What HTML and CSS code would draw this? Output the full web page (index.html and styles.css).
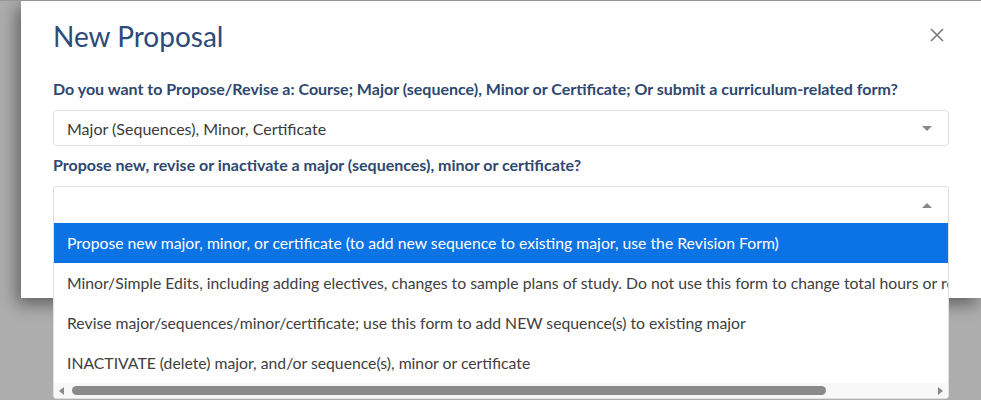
FILE: index.html
```html
<!DOCTYPE html>
<html lang="en">
<head>
    <meta charset="UTF-8">
    <meta name="viewport" content="width=device-width, initial-scale=1.0">
    <title>New Proposal</title>
    <link rel="stylesheet" href="styles.css">
</head>
<body>
    <div class="modal">
        <div class="modal-header">
            <h1>New Proposal</h1>
            <button class="close" aria-label="Close">
                <svg width="16" height="16" viewBox="0 0 16 16">
                    <path d="M2 2L14 14M14 2L2 14" stroke="currentColor" stroke-width="1.6" fill="none" />
                </svg>
            </button>
        </div>

        <label>Do you want to Propose/Revise a: Course; Major (sequence), Minor or Certificate; Or submit a curriculum-related form?</label>
        <div class="select">
            <span>Major (Sequences), Minor, Certificate</span>
            <span class="arrow down"></span>
        </div>

        <label>Propose new, revise or inactivate a major (sequences), minor or certificate?</label>
        <div class="select-wrap">
            <div class="select open">
                <span></span>
                <span class="arrow up"></span>
            </div>
            <div class="dropdown">
                <ul class="options">
                    <li class="active">Propose new major, minor, or certificate (to add new sequence to existing major, use the Revision Form)</li>
                    <li>Minor/Simple Edits, including adding electives, changes to sample plans of study. Do not use this form to change total hours or requirements</li>
                    <li>Revise major/sequences/minor/certificate; use this form to add NEW sequence(s) to existing major</li>
                    <li>INACTIVATE (delete) major, and/or sequence(s), minor or certificate</li>
                </ul>
                <div class="hscroll">
                    <span class="sarrow left"></span>
                    <div class="track">
                        <div class="thumb"></div>
                    </div>
                    <span class="sarrow right"></span>
                </div>
            </div>
        </div>
    </div>
</body>
</html>
```

FILE: styles.css
```css
html, body {
    height: 100%;
}

body {
    margin: 0;
    font-family: Lato, "Liberation Sans", sans-serif;
    background-color: #adadad;
    border-top: 1px solid #979797;
    overflow: hidden;
}

.modal {
    margin-left: 21px;
    width: 960px;
    background-color: #fff;
    padding: 18px 32px 75px 32px;
    box-sizing: border-box;
    box-shadow: -4px 6px 16px rgba(0, 0, 0, 0.45);
}

.modal-header {
    display: flex;
    align-items: center;
    justify-content: space-between;
    margin-bottom: 26px;
}

h1 {
    margin: 0;
    font-size: 28px;
    font-weight: 400;
    line-height: 34px;
    color: #2d4a7a;
}

.close {
    background: none;
    border: none;
    padding: 0;
    margin-right: 4px;
    margin-top: -2px;
    color: #7a7a7a;
    cursor: pointer;
    display: flex;
}

label {
    display: block;
    font-size: 16px;
    font-weight: 700;
    line-height: 20px;
    color: #2e4870;
    margin-bottom: 11px;
}

.select {
    display: flex;
    align-items: center;
    justify-content: space-between;
    height: 36px;
    padding: 0 16px 0 13px;
    border: 1px solid #e0e0e0;
    border-radius: 4px;
    box-sizing: border-box;
    font-size: 16px;
    color: #3a3a3a;
    margin-bottom: 9px;
}

.select-wrap {
    position: relative;
}

.select.open {
    height: 37px;
    margin-bottom: 0;
    border-bottom: none;
    border-radius: 4px 4px 0 0;
}

.arrow {
    width: 0;
    height: 0;
    border-left: 5px solid transparent;
    border-right: 5px solid transparent;
}

.arrow.down {
    border-top: 5px solid #888;
}

.arrow.up {
    border-bottom: 5px solid #888;
}

.dropdown {
    position: absolute;
    top: 100%;
    left: 0;
    right: 0;
    background-color: #fff;
    border: 1px solid #e0e0e0;
    border-top: none;
    border-radius: 0 0 4px 4px;
    overflow: hidden;
}

.options {
    list-style: none;
    margin: 0;
    padding: 0;
}

.options li {
    height: 40px;
    line-height: 40px;
    padding: 0 13px;
    font-size: 15.75px;
    color: #404040;
    white-space: nowrap;
}

.options li.active {
    background-color: #0b73e3;
    color: #fff;
}

.hscroll {
    display: flex;
    align-items: center;
    height: 15px;
    padding: 0 5px;
    background-color: #f8f8f8;
}

.sarrow {
    width: 0;
    height: 0;
    border-top: 4px solid transparent;
    border-bottom: 4px solid transparent;
}

.sarrow.left {
    border-right: 5px solid #8a8a8a;
}

.sarrow.right {
    border-left: 5px solid #8a8a8a;
}

.track {
    flex: 1;
    padding: 0 8px;
}

.thumb {
    width: 754px;
    height: 9px;
    border-radius: 5px;
    background-color: #8a8a8a;
}
```
